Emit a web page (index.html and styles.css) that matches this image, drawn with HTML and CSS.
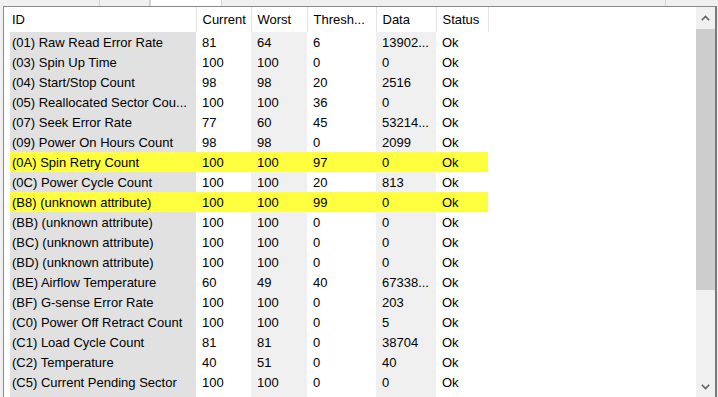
FILE: index.html
```html
<!DOCTYPE html>
<html>
<head>
<meta charset="utf-8">
<link rel="stylesheet" href="styles.css">
</head>
<body>
<div class="tabs">
  <div class="tab t1"></div>
  <div class="tab t2"></div>
  <div class="tab t3 sel"></div>
  <div class="tab t4"></div>
  <div class="tab t5"></div>
</div>
<div class="frame">
  <div class="list">
    <table class="grid">
      <colgroup>
        <col class="w-id"><col class="w-cur"><col class="w-worst"><col class="w-thr"><col class="w-data"><col class="w-stat">
      </colgroup>
      <thead>
        <tr><th class="id">ID</th><th>Current</th><th>Worst</th><th>Thresh...</th><th>Data</th><th>Status</th></tr>
      </thead>
      <tbody>
        <tr><td class="id">(01) Raw Read Error Rate</td><td>81</td><td class="alt">64</td><td>6</td><td class="alt">13902...</td><td>Ok</td></tr>
        <tr><td class="id">(03) Spin Up Time</td><td>100</td><td class="alt">100</td><td>0</td><td class="alt">0</td><td>Ok</td></tr>
        <tr><td class="id">(04) Start/Stop Count</td><td>98</td><td class="alt">98</td><td>20</td><td class="alt">2516</td><td>Ok</td></tr>
        <tr><td class="id">(05) Reallocated Sector Cou...</td><td>100</td><td class="alt">100</td><td>36</td><td class="alt">0</td><td>Ok</td></tr>
        <tr><td class="id">(07) Seek Error Rate</td><td>77</td><td class="alt">60</td><td>45</td><td class="alt">53214...</td><td>Ok</td></tr>
        <tr><td class="id">(09) Power On Hours Count</td><td>98</td><td class="alt">98</td><td>0</td><td class="alt">2099</td><td>Ok</td></tr>
        <tr class="warn"><td class="id">(0A) Spin Retry Count</td><td>100</td><td class="alt">100</td><td>97</td><td class="alt">0</td><td>Ok</td></tr>
        <tr><td class="id">(0C) Power Cycle Count</td><td>100</td><td class="alt">100</td><td>20</td><td class="alt">813</td><td>Ok</td></tr>
        <tr class="warn"><td class="id">(B8) (unknown attribute)</td><td>100</td><td class="alt">100</td><td>99</td><td class="alt">0</td><td>Ok</td></tr>
        <tr><td class="id">(BB) (unknown attribute)</td><td>100</td><td class="alt">100</td><td>0</td><td class="alt">0</td><td>Ok</td></tr>
        <tr><td class="id">(BC) (unknown attribute)</td><td>100</td><td class="alt">100</td><td>0</td><td class="alt">0</td><td>Ok</td></tr>
        <tr><td class="id">(BD) (unknown attribute)</td><td>100</td><td class="alt">100</td><td>0</td><td class="alt">0</td><td>Ok</td></tr>
        <tr><td class="id">(BE) Airflow Temperature</td><td>60</td><td class="alt">49</td><td>40</td><td class="alt">67338...</td><td>Ok</td></tr>
        <tr><td class="id">(BF) G-sense Error Rate</td><td>100</td><td class="alt">100</td><td>0</td><td class="alt">203</td><td>Ok</td></tr>
        <tr><td class="id">(C0) Power Off Retract Count</td><td>100</td><td class="alt">100</td><td>0</td><td class="alt">5</td><td>Ok</td></tr>
        <tr><td class="id">(C1) Load Cycle Count</td><td>81</td><td class="alt">81</td><td>0</td><td class="alt">38704</td><td>Ok</td></tr>
        <tr><td class="id">(C2) Temperature</td><td>40</td><td class="alt">51</td><td>0</td><td class="alt">40</td><td>Ok</td></tr>
        <tr><td class="id">(C5) Current Pending Sector</td><td>100</td><td class="alt">100</td><td>0</td><td class="alt">0</td><td>Ok</td></tr>
        <tr><td class="id">(C6) Offline Uncorrectable</td><td>100</td><td class="alt">100</td><td>0</td><td class="alt">0</td><td>Ok</td></tr>
      </tbody>
    </table>
  </div>
  <div class="scrollbar">
    <div class="sb-btn">
      <svg width="9" height="6" viewBox="0 0 9 6"><path d="M0.8 5.2 L4.5 1.5 L8.2 5.2" fill="none" stroke="#606060" stroke-width="1.6"/></svg>
    </div>
    <div class="sb-thumb"></div>
    <div class="sb-track"></div>
    <div class="sb-btn">
      <svg width="9" height="6" viewBox="0 0 9 6"><path d="M0.8 0.8 L4.5 4.5 L8.2 0.8" fill="none" stroke="#606060" stroke-width="1.6"/></svg>
    </div>
  </div>
</div>
</body>
</html>
```
FILE: styles.css
```css
html, body {
  margin: 0;
  padding: 0;
}
body {
  width: 718px;
  height: 397px;
  overflow: hidden;
  background: #f0f0f0;
  font-family: "Liberation Sans", Arial, sans-serif;
  font-size: 13px;
  color: #000;
}
.tabs {
  display: flex;
  height: 6px;
}
.tab {
  box-sizing: border-box;
  height: 6px;
  background: #f0f0f0;
  border-right: 1px solid #d4d4d4;
}
.t1 { width: 100px; }
.t2 { width: 50px; }
.t3 { width: 72px; }
.t4 { width: 444px; }
.t5 { flex: 1; border-right: none; }
.sel { background: #ffffff; border-left: 1px solid #d4d4d4; }
.frame {
  box-sizing: border-box;
  margin-left: 3px;
  width: 714px;
  height: 400px;
  background: #fff;
  border: 1px solid #8a8a8a;
  border-right: 2px solid #7a7a7a;
  display: flex;
}
.list {
  flex: 1;
  padding-left: 6px;
  overflow: hidden;
}
.grid {
  border-collapse: collapse;
  table-layout: fixed;
  width: 478px;
}
.w-id { width: 186px; }
.w-cur { width: 55px; }
.w-worst { width: 56px; }
.w-thr { width: 69px; }
.w-data { width: 60px; }
.w-stat { width: 52px; }
.grid th {
  height: 25px;
  padding: 0 0 1px 6px;
  font-weight: normal;
  text-align: left;
  white-space: nowrap;
  overflow: hidden;
  border-right: 1px solid #e5e5e5;
  box-sizing: border-box;
}
.grid th.id { padding-left: 2px; }
.grid td {
  height: 20px;
  padding: 0 0 0 6px;
  white-space: nowrap;
  overflow: hidden;
}
.grid td.id {
  padding-left: 2px;
  background: #e1e1e1;
}
.grid td.alt { background: #f0f0f0; }
.grid tr.warn td { background: #ffff3f; }
.scrollbar {
  width: 19px;
  display: flex;
  flex-direction: column;
  background: #f0f0f0;
}
.sb-btn {
  height: 22px;
  display: flex;
  align-items: center;
  justify-content: center;
}
.sb-thumb {
  height: 261px;
  background: #cdcdcd;
}
.sb-track { height: 86px; }
```
